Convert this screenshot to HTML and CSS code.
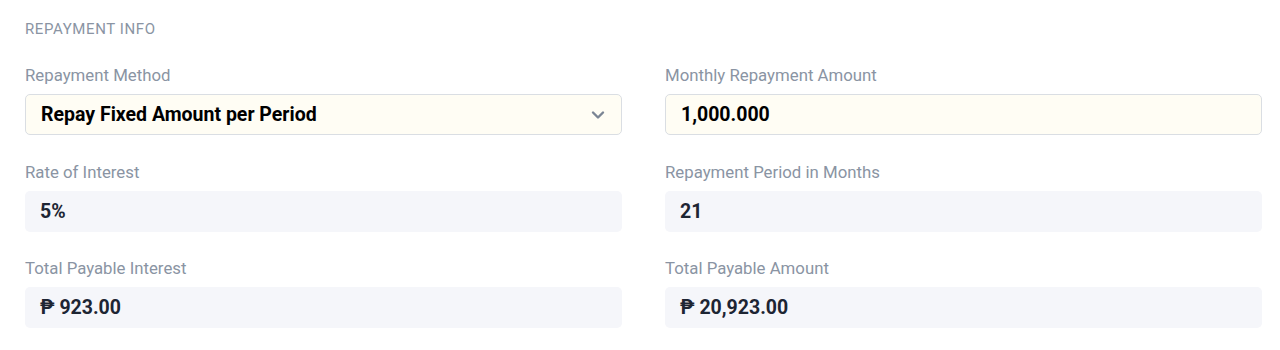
FILE: index.html
```html
<html>
<head>
<meta charset="utf-8">
<link rel="stylesheet" href="styles.css">
</head>
<body>
<section class="info">
	<div class="info-title">REPAYMENT INFO</div>
	<div class="grid">
		<div class="field">
			<label class="field-label">Repayment Method</label>
			<div class="field-box editable">
				<span>Repay Fixed Amount per Period</span>
				<svg class="chevron" width="14" height="10" viewBox="0 0 14 10"><path d="M2 2.5 L7 7.5 L12 2.5" fill="none" stroke="#7b8594" stroke-width="2.4" stroke-linecap="round" stroke-linejoin="round"/></svg>
			</div>
		</div>
		<div class="field">
			<label class="field-label">Monthly Repayment Amount</label>
			<div class="field-box editable"><span>1,000.000</span></div>
		</div>
		<div class="field">
			<label class="field-label">Rate of Interest</label>
			<div class="field-box readonly"><span>5%</span></div>
		</div>
		<div class="field">
			<label class="field-label">Repayment Period in Months</label>
			<div class="field-box readonly"><span>21</span></div>
		</div>
		<div class="field">
			<label class="field-label">Total Payable Interest</label>
			<div class="field-box readonly"><span>&#8369; 923.00</span></div>
		</div>
		<div class="field">
			<label class="field-label">Total Payable Amount</label>
			<div class="field-box readonly"><span>&#8369; 20,923.00</span></div>
		</div>
	</div>
</section>
</body>
</html>
```
FILE: styles.css
```css
body {
	margin: 0px;
	font-family: Roboto, "Liberation Sans", sans-serif;
	background: #ffffff;
}
.info {
	padding: 20px 18px 0 25px;
}
.info-title {
	font-size: 15px;
	color: #8a94a3;
	letter-spacing: 0.6px;
	line-height: 18px;
}
.grid {
	display: grid;
	grid-template-columns: 1fr 1fr;
	column-gap: 43px;
	row-gap: 26.5px;
	margin-top: 27px;
}
.field-label {
	display: block;
	font-size: 16.8px;
	color: #8a94a3;
	line-height: 20px;
	margin-bottom: 9px;
}
.field-box {
	height: 41px;
	box-sizing: border-box;
	border-radius: 5px;
	display: flex;
	align-items: center;
	justify-content: space-between;
	padding: 0 16px 0 15px;
	font-size: 19.5px;
	font-weight: 700;
}
.editable {
	background-color: #fffdf4;
	border: 1px solid #dadee3;
	color: #000000;
}
.readonly {
	background-color: #f5f6fa;
	color: #1d2533;
	padding-left: 15px;
}
```
